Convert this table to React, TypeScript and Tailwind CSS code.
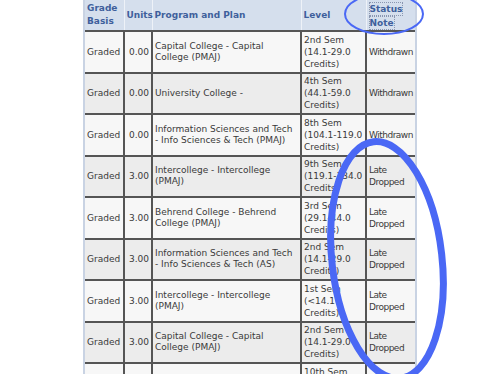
import React from "react";

type Row = { basis: string; units: string; plan: string[]; level: string[]; status: string[] };

const rows: Row[] = [
  { basis: "Graded", units: "0.00", plan: ["Capital College - Capital", "College (PMAJ)"], level: ["2nd Sem", "(14.1-29.0", "Credits)"], status: ["Withdrawn"] },
  { basis: "Graded", units: "0.00", plan: ["University College -"], level: ["4th Sem", "(44.1-59.0", "Credits)"], status: ["Withdrawn"] },
  { basis: "Graded", units: "0.00", plan: ["Information Sciences and Tech", "- Info Sciences & Tech (PMAJ)"], level: ["8th Sem", "(104.1-119.0", "Credits)"], status: ["Withdrawn"] },
  { basis: "Graded", units: "3.00", plan: ["Intercollege - Intercollege", "(PMAJ)"], level: ["9th Sem", "(119.1-134.0", "Credits)"], status: ["Late", "Dropped"] },
  { basis: "Graded", units: "3.00", plan: ["Behrend College - Behrend", "College (PMAJ)"], level: ["3rd Sem", "(29.1-44.0", "Credits)"], status: ["Late", "Dropped"] },
  { basis: "Graded", units: "3.00", plan: ["Information Sciences and Tech", "- Info Sciences & Tech (AS)"], level: ["2nd Sem", "(14.1-29.0", "Credits)"], status: ["Late", "Dropped"] },
  { basis: "Graded", units: "3.00", plan: ["Intercollege - Intercollege", "(PMAJ)"], level: ["1st Sem", "(<14.1", "Credits)"], status: ["Late", "Dropped"] },
  { basis: "Graded", units: "3.00", plan: ["Capital College - Capital", "College (PMAJ)"], level: ["2nd Sem", "(14.1-29.0", "Credits)"], status: ["Late", "Dropped"] },
  { basis: "Graded", units: "3.00", plan: ["Information Sciences and Tech", "- Info Sciences & Tech (PMAJ)"], level: ["10th Sem", "(134.1+", "Credits)"], status: ["Late", "Dropped"] },
];

export default function App() {
  return (
    <div className="relative w-[499px] h-[374px] overflow-hidden bg-white font-['DejaVu_Sans',_Verdana,_sans-serif] text-[9px] leading-[12px] text-[#3a3a3a]">
      <div className="pl-[83px]">
        <div className="w-[334px] border-x-2 border-[#c9d3e3]">
          <table className="table-fixed border-collapse w-[330px]">
            <colgroup>
              <col className="w-[39px]" />
              <col className="w-[28px]" />
              <col className="w-[149px]" />
              <col className="w-[65px]" />
              <col className="w-[49px]" />
            </colgroup>
            <thead>
              <tr className="h-[30px] bg-[#d5dfed] text-[#3f5f9c] font-bold text-left">
                <th className="px-[2px] align-middle border-r border-[#eef2f8] border-b-2 border-b-[#555] leading-[13px]">Grade<br />Basis</th>
                <th className="px-[2px] align-middle border-r border-[#eef2f8] border-b-2 border-b-[#555]">Units</th>
                <th className="px-[2px] align-middle border-r border-[#eef2f8] border-b-2 border-b-[#555]">Program and Plan</th>
                <th className="px-[2px] align-middle border-r border-[#eef2f8] border-b-2 border-b-[#555]">Level</th>
                <th className="px-[2px] pt-[2px] align-middle border-b-2 border-b-[#555] leading-[13px]">
                  <span className="inline-block border border-dotted border-[#8a96b0] leading-[12px]">Status</span>
                  <br />
                  <span className="inline-block border border-dotted border-[#8a96b0] leading-[12px]">Note</span>
                </th>
              </tr>
            </thead>
            <tbody>
              {rows.map((r, i) => (
                <tr key={i} className={`h-[41.5px] ${i % 2 === 0 ? "bg-[#f7f7f7]" : "bg-[#ececec]"}`}>
                  <td className="px-[2px] align-middle border-2 border-[#555] border-l-0">{r.basis}</td>
                  <td className="px-[2px] align-middle text-right border-2 border-[#555]">{r.units}</td>
                  <td className="px-[2px] align-middle border-2 border-[#555] leading-[11px]">
                    {r.plan.map((l, k) => (
                      <div key={k}>{l}</div>
                    ))}
                  </td>
                  <td className="px-[2px] align-middle border-2 border-[#555]">
                    {r.level.map((l, k) => (
                      <div key={k} className="whitespace-nowrap">{l}</div>
                    ))}
                  </td>
                  <td className="pl-[2px] pr-0 align-middle border-2 border-[#555] border-r-0 tracking-[-0.5px]">
                    {r.status.map((l, k) => (
                      <div key={k} className="whitespace-nowrap">{l}</div>
                    ))}
                  </td>
                </tr>
              ))}
            </tbody>
          </table>
        </div>
      </div>
      <svg className="absolute left-0 top-0 pointer-events-none" width="499" height="374" viewBox="0 0 499 374">
        <ellipse cx="384" cy="14" rx="39" ry="20" fill="none" stroke="#4a68f5" strokeWidth="2" />
        <ellipse cx="387" cy="260" rx="55" ry="119" fill="none" stroke="#4a68f5" strokeWidth="7" transform="rotate(-6.5 387 260)" />
      </svg>
    </div>
  );
}
